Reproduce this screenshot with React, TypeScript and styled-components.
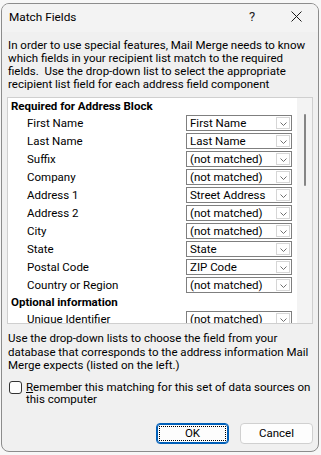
import React from "react";
import styled, { createGlobalStyle } from "styled-components";

const Global = createGlobalStyle`
  html, body { margin: 0; padding: 0; background: #f7f7f7; }
  body { font-family: "Segoe UI", Roboto, "Noto Sans", sans-serif; font-size: 11.5px; color: #000; }
  * { box-sizing: border-box; }
`;

const Window = styled.div`
  width: 318px;
  height: 449px;
  margin: 3px 0 0 1px;
  border: 1px solid #8c8c8c;
  border-radius: 8px;
  background: #f0f0f0;
  overflow: hidden;
  display: flex;
  flex-direction: column;
`;

const TitleBar = styled.div`
  height: 28px;
  flex: none;
  display: flex;
  align-items: center;
  padding: 0 0 3px 7px;
  background: #f3f3f3;
`;

const Title = styled.div`
  flex: 1;
  font-size: 11.8px;
`;

const CaptionButton = styled.div<{ $w: number }>`
  width: ${(p) => p.$w}px;
  height: 20px;
  display: flex;
  align-items: center;
  justify-content: center;
  font-size: 13px;
  color: #222;
`;

const Body = styled.div`
  flex: 1;
  display: flex;
  flex-direction: column;
  padding: 0 5px 0 6px;
`;

const Para = styled.div<{ $lh: number; $mt: number }>`
  line-height: ${(p) => p.$lh}px;
  margin-top: ${(p) => p.$mt}px;
  white-space: nowrap;
`;

const ListBox = styled.div`
  margin: 6px 0 0 -1px;
  height: 227px;
  border: 1px solid #cfcfcf;
  display: flex;
  background: #ffffff;
`;

const ListContent = styled.div`
  flex: 1;
  overflow: hidden;
  background: #ffffff;
`;

const ScrollTrack = styled.div`
  width: 15px;
  flex: none;
  background: #f3f3f3;
  display: flex;
  justify-content: center;
  padding-top: 16px;
  padding-left: 1px;
`;

const Thumb = styled.div`
  width: 2px;
  height: 72px;
  border-radius: 1px;
  background: #858585;
`;

const Heading = styled.div`
  height: 16px;
  line-height: 16px;
  padding-left: 3px;
  font-weight: bold;
`;

const Row = styled.div`
  height: 18px;
  display: grid;
  grid-template-columns: 1fr 106px;
  align-items: center;
  padding: 0 5px 0 19px;
`;

const Label = styled.div`
  white-space: nowrap;
`;

const Select = styled.div`
  height: 16px;
  border: 1px solid #7f7f7f;
  background: #fff;
  display: flex;
  align-items: center;
  padding-left: 3px;
  padding-right: 1px;
`;

const SelectText = styled.div`
  flex: 1;
  white-space: nowrap;
  overflow: hidden;
  line-height: 14px;
`;

const ArrowBox = styled.div`
  width: 14px;
  height: 12px;
  border: 1px solid #d6d6d6;
  display: flex;
  align-items: flex-end;
  justify-content: center;
  padding-bottom: 2px;
`;

const CheckRow = styled.div`
  margin-top: 8px;
  display: flex;
  align-items: flex-start;
  margin-left: 1px;
`;

const Box = styled.div`
  width: 13px;
  height: 13px;
  border: 1px solid #333;
  border-radius: 3px;
  background: #fdfdfd;
  flex: none;
`;

const CheckLabel = styled.div`
  margin-left: 4px;
  margin-top: 0px;
  line-height: 12.5px;
  white-space: nowrap;
`;

const Accel = styled.span`
  text-decoration: underline;
`;

const Footer = styled.div`
  margin-top: 17px;
  display: flex;
  justify-content: flex-end;
  gap: 11px;
`;

const Button = styled.div<{ $primary?: boolean }>`
  width: 73px;
  height: 21px;
  border-radius: 4px;
  background: #fdfdfd;
  border: ${(p) => (p.$primary ? "1px solid #005fb8" : "1px solid #d0d0d0")};
  box-shadow: ${(p) => (p.$primary ? "inset 0 0 0 1px #005fb8" : "none")};
  display: flex;
  align-items: center;
  justify-content: center;
  padding: 2px;
`;

const Focus = styled.div<{ $on?: boolean }>`
  width: 100%;
  height: 100%;
  border: 1px dotted ${(p) => (p.$on ? "#000" : "transparent")};
  display: flex;
  align-items: center;
  justify-content: center;
  line-height: 14px;
`;

const Chevron = () => (
  <svg width="7" height="4" viewBox="0 0 7 4">
    <path d="M0.5 0.5 L3.5 3.5 L6.5 0.5" fill="none" stroke="#6f6f6f" strokeWidth="1" />
  </svg>
);

type Field = [string, string];

const required: Field[] = [
  ["First Name", "First Name"],
  ["Last Name", "Last Name"],
  ["Suffix", "(not matched)"],
  ["Company", "(not matched)"],
  ["Address 1", "Street Address"],
  ["Address 2", "(not matched)"],
  ["City", "(not matched)"],
  ["State", "State"],
  ["Postal Code", "ZIP Code"],
  ["Country or Region", "(not matched)"],
];

const optional: Field[] = [["Unique Identifier", "(not matched)"]];

const FieldRow = ({ f }: { f: Field }) => (
  <Row>
    <Label>{f[0]}</Label>
    <Select>
      <SelectText>{f[1]}</SelectText>
      <ArrowBox>
        <Chevron />
      </ArrowBox>
    </Select>
  </Row>
);

export default function App() {
  return (
    <>
      <Global />
      <Window>
        <TitleBar>
          <Title>Match Fields</Title>
          <CaptionButton $w={44}>?</CaptionButton>
          <CaptionButton $w={44}>
            <svg width="11" height="11" viewBox="0 0 11 11">
              <path d="M0.5 0.5 L10.5 10.5 M10.5 0.5 L0.5 10.5" stroke="#1a1a1a" strokeWidth="1" />
            </svg>
          </CaptionButton>
        </TitleBar>
        <Body>
          <Para $lh={13} $mt={7}>
            In order to use special features, Mail Merge needs to know
            <br />
            which fields in your recipient list match to the required
            <br />
            fields.&nbsp; Use the drop-down list to select the appropriate
            <br />
            recipient list field for each address field component
          </Para>
          <ListBox>
            <ListContent>
              <Heading>Required for Address Block</Heading>
              {required.map((f) => (
                <FieldRow key={f[0]} f={f} />
              ))}
              <Heading>Optional information</Heading>
              {optional.map((f) => (
                <FieldRow key={f[0]} f={f} />
              ))}
            </ListContent>
            <ScrollTrack>
              <Thumb />
            </ScrollTrack>
          </ListBox>
          <Para $lh={13.5} $mt={8}>
            Use the drop-down lists to choose the field from your
            <br />
            database that corresponds to the address information Mail
            <br />
            Merge expects (listed on the left.)
          </Para>
          <CheckRow>
            <Box />
            <CheckLabel>
              <Accel>R</Accel>emember this matching for this set of data sources on
              <br />
              this computer
            </CheckLabel>
          </CheckRow>
          <Footer>
            <Button $primary>
              <Focus $on>OK</Focus>
            </Button>
            <Button>
              <Focus>Cancel</Focus>
            </Button>
          </Footer>
        </Body>
      </Window>
    </>
  );
}
